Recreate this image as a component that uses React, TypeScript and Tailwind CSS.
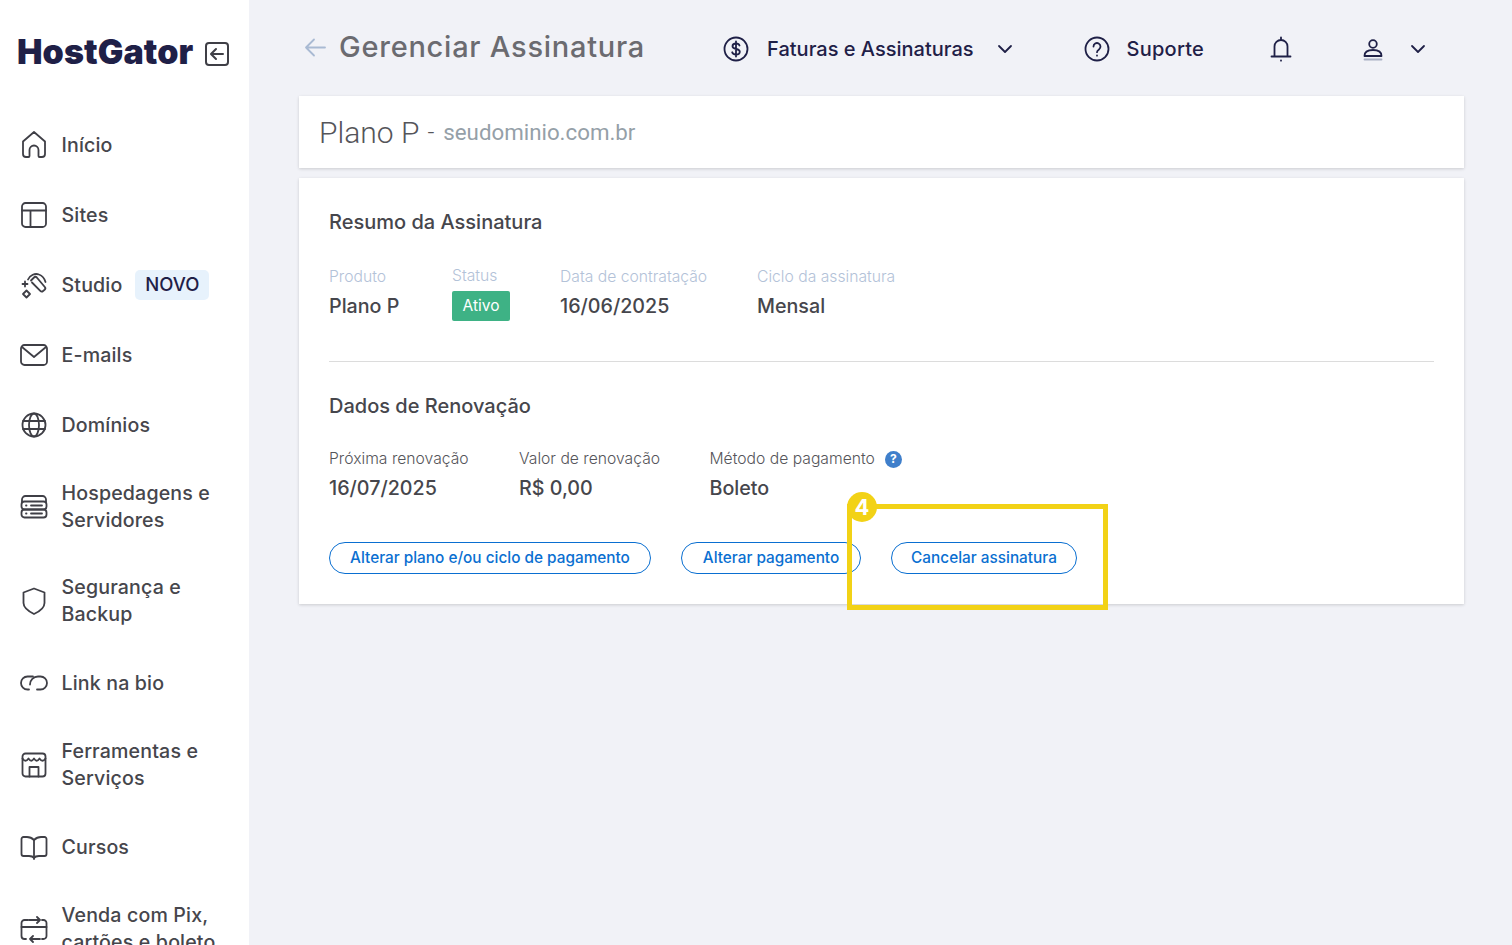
import type { ReactNode } from "react";

const sans = "font-['Inter','Noto_Sans',sans-serif]";

// sidebar icons, all drawn on a 28x28 box
function NavIcon({ children }: { children: ReactNode }) {
  return (
    <svg
      width="28"
      height="28"
      viewBox="0 0 28 28"
      fill="none"
      stroke="#3f3f46"
      strokeWidth="1.8"
      strokeLinecap="round"
      strokeLinejoin="round"
      className="shrink-0"
    >
      {children}
    </svg>
  );
}

const navItems: { label: ReactNode; badge?: string; tall?: boolean; icon: ReactNode }[] = [
  {
    label: "Início",
    icon: (
      <path d="M3 10.500 14 1l11 9.500V23a3 3 0 0 1-3 3h-2.500a1 1 0 0 1-1-1v-6a4.500 4.500 0 0 0-9 0v6a1 1 0 0 1-1 1H6a3 3 0 0 1-3-3z" />
    ),
  },
  {
    label: "Sites",
    icon: (
      <>
        <rect x="2" y="2" width="24" height="24" rx="3.500" />
        <path d="M2 9.500h24M10.500 9.500V26" />
      </>
    ),
  },
  {
    label: "Studio",
    badge: "NOVO",
    icon: (
      <>
        <path d="M11 9.500 14 6.500a2 2 0 0 1 2.800 0l8 9.500a2 2 0 0 1-.2 2.800l-1.500 1.200a2 2 0 0 1-2.800-.2L12 11.500" />
        <path d="M8 8.500C10 4 15 2 19 3.500c3 1 5.500 4 6.500 7.500" />
        <path d="M5 10.500v5M2.500 13h5M6.500 19.500l3.500 3.500-3.500 3.500L3 23z" />
      </>
    ),
  },
  {
    label: "E-mails",
    icon: (
      <>
        <rect x="1" y="4" width="26" height="20" rx="3.500" />
        <path d="m2 6 12 10L26 6" />
      </>
    ),
  },
  {
    label: "Domínios",
    icon: (
      <>
        <circle cx="14" cy="14" r="11.500" />
        <ellipse cx="14" cy="14" rx="5" ry="11.500" />
        <path d="M3 10h22M3 18h22" />
      </>
    ),
  },
  {
    label: (
      <>
        Hospedagens e
        <br />
        Servidores
      </>
    ),
    tall: true,
    icon: (
      <>
        <path d="M2 9V6.500A3.500 3.500 0 0 1 5.500 3h17A3.500 3.500 0 0 1 26 6.500V9" />
        <rect x="1.500" y="8.500" width="25" height="8" rx="3" />
        <rect x="1.500" y="16.500" width="25" height="8" rx="3" />
        <path d="M6 12.500h.5M6 20.500h.5M11 12.500h11M11 20.500h11" />
      </>
    ),
  },
  {
    label: (
      <>
        Segurança e
        <br />
        Backup
      </>
    ),
    tall: true,
    icon: <path d="M14 1.500 24.500 5.500v10.500c0 5-5 8.500-10.500 11C9 24.500 3.500 21 3.500 16V5.500z" />,
  },
  {
    label: "Link na bio",
    icon: (
      <>
        <path d="M9 20.500H7.500a6.500 6.500 0 0 1 0-13H13" />
        <path d="M10 15.500c0-4.500 3.500-8 8-8h2.500a6.500 6.500 0 0 1 0 13H17" />
      </>
    ),
  },
  {
    label: (
      <>
        Ferramentas e
        <br />
        Serviços
      </>
    ),
    tall: true,
    icon: (
      <>
        <rect x="2.500" y="2.500" width="23" height="23" rx="3" />
        <path d="M2.500 7.500c2 3 4 3 6 0 2 3 3.500 3 5.500 0 2 3 3.500 3 5.500 0 2 3 4 3 6 0" />
        <path d="M9.500 25.500V16h9v9.500" />
      </>
    ),
  },
  {
    label: "Cursos",
    icon: (
      <>
        <path d="M14 7c-2-2-4-3-7-3H3.500a2 2 0 0 0-2 2v15a2 2 0 0 0 2 2H9c2 0 4 .5 5 2 1-1.500 3-2 5-2h5.500a2 2 0 0 0 2-2V6a2 2 0 0 0-2-2H21c-3 0-5 1-7 3z" />
        <path d="M14 7v19" />
      </>
    ),
  },
  {
    label: (
      <>
        Venda com Pix,
        <br />
        cartões e boleto
      </>
    ),
    tall: true,
    icon: (
      <>
        <path d="M8 5H4.500a3 3 0 0 0-3 3v13a3 3 0 0 0 3 3H6M22 24h1.500a3 3 0 0 0 3-3V8a3 3 0 0 0-3-3H22" />
        <path d="M9 5h11M17 2l3 3-3 3M1.500 12h25M10 24h10M13 21l-3 3 3 3" />
      </>
    ),
  },
];

function Sidebar() {
  return (
    <aside className="w-[249px] h-[945px] shrink-0 overflow-hidden bg-white">
      <div className="h-[110px] flex items-start pt-[31px] pl-[17px] gap-[11px]">
        <span className="text-[34px] leading-[42px] font-black tracking-[0.1px] text-[#1f2047] font-['Inter',sans-serif]">
          HostGator
        </span>
        <svg width="26" height="26" viewBox="0 0 26 26" fill="none" stroke="#3f3f46" strokeWidth="2" strokeLinecap="round" strokeLinejoin="round" className="mt-[10px]">
          <rect x="2" y="2" width="22" height="22" rx="3" />
          <path d="M19 13H7.500M12 8l-5 5 5 5" />
        </svg>
      </div>
      <nav>
        {navItems.map((item, i) => (
          <div key={i} className={`flex items-center pl-[20px] ${item.tall ? "h-[94px]" : "h-[70px]"}`}>
            <NavIcon>{item.icon}</NavIcon>
            <div className="ml-[13.500px] text-[19.600px] leading-[27px] font-medium text-[#46464c] whitespace-nowrap tracking-[0.15px]">{item.label}</div>
            {item.badge && (
              <span className="ml-[13px] h-[30px] w-[74px] flex items-center justify-center rounded-[5px] bg-[#e7f2fc] text-[#1f2047] text-[18.500px] font-medium">
                {item.badge}
              </span>
            )}
          </div>
        ))}
      </nav>
    </aside>
  );
}

function TopBar() {
  const chevron = (
    <svg width="18" height="18" viewBox="0 0 18 18" fill="none" stroke="#1f2047" strokeWidth="1.800" strokeLinecap="round" strokeLinejoin="round">
      <path d="m3 6 6 6 6-6" />
    </svg>
  );
  return (
    <header className="h-[96px] flex items-center text-[#1f2047] pb-[2px]">
      <svg width="24" height="24" viewBox="0 0 24 24" fill="none" stroke="#a9bad3" strokeWidth="1.800" strokeLinecap="round" strokeLinejoin="round" className="ml-[4px]">
        <path d="M22 12.500H3M11 4.500l-8 8 8 8" />
      </svg>
      <h1 className="ml-[12px] text-[29px] font-medium text-[#6b6b70] tracking-[0.75px] whitespace-nowrap">Gerenciar Assinatura</h1>
      <div className="ml-[78px] mt-[4px] flex items-center">
        <svg width="26" height="26" viewBox="0 0 26 26" fill="none" stroke="#1f2047" strokeWidth="1.800" strokeLinecap="round">
          <circle cx="13" cy="13" r="11.500" />
          <path d="M16.500 9.500c-.5-1.500-2-2-3.500-2-2 0-3.500 1-3.500 2.800 0 3.700 7.300 1.700 7.300 5.400 0 1.800-1.700 2.800-3.800 2.800-1.700 0-3.200-.7-3.800-2.200M13 5.500v15" />
        </svg>
        <span className="ml-[18px] text-[20px] font-medium whitespace-nowrap">Faturas e Assinaturas</span>
        <span className="ml-[22px]">{chevron}</span>
      </div>
      <div className="ml-[70px] mt-[4px] flex items-center">
        <svg width="26" height="26" viewBox="0 0 26 26" fill="none" stroke="#1f2047" strokeWidth="1.800" strokeLinecap="round" strokeLinejoin="round">
          <circle cx="13" cy="13" r="11.500" />
          <path d="M9.500 10.500a3.500 3.500 0 1 1 5.500 2.900c-1.200.8-2 1.400-2 2.800M13 19.500v.2" />
        </svg>
        <span className="ml-[17px] text-[20px] font-medium tracking-[0.25px]">Suporte</span>
      </div>
      <svg width="24" height="26" viewBox="0 0 24 26" fill="none" stroke="#1f2047" strokeWidth="1.800" strokeLinecap="round" strokeLinejoin="round" className="ml-[65px] mt-[4px]">
        <path d="M12 1.500v2.500M5.500 20.500V10.500a6.500 6.500 0 0 1 13 0v10M2.500 20.500h19M12 24.500v.2" />
      </svg>
      <svg width="24" height="24" viewBox="0 0 24 24" fill="none" stroke="#1f2047" strokeWidth="1.800" strokeLinecap="round" strokeLinejoin="round" className="ml-[68px] mt-[4px]">
        <circle cx="12" cy="7" r="3.800" />
        <path d="M3.500 19c0-4 3.500-6 8.500-6s8.500 2 8.500 6z" />
        <path d="M3.500 22.500h17" stroke="#a9afc4" />
      </svg>
      <span className="ml-[24px] mt-[4px]">{chevron}</span>
    </header>
  );
}

function Field({ label, value, muted, children }: { label: ReactNode; value?: string; muted?: boolean; children?: ReactNode }) {
  return (
    <div>
      <div className={`flex items-center h-[20px] text-[15.700px] font-light whitespace-nowrap ${muted ? "text-[#b3c2d8]" : "text-[#55555a]"}`}>{label}</div>
      {children ?? <div className="mt-[4px] text-[19.700px] leading-[30px] font-medium text-[#46464c] whitespace-nowrap">{value}</div>}
    </div>
  );
}

function PillButton({ width, children }: { width: string; children: ReactNode }) {
  return (
    <button className={`${width} h-[32px] rounded-full border border-[#0a6fd1] text-[#0a6fd1] text-[15.350px] font-medium whitespace-nowrap bg-white`}>
      {children}
    </button>
  );
}

export default function App() {
  return (
    <div className={`w-[1512px] h-[945px] overflow-hidden flex bg-[#f1f2f7] relative ${sans}`}>
      <Sidebar />
      <main className="w-[1263px] pl-[50px] pr-[48px]">
        <TopBar />
        <section className="h-[72px] bg-white shadow-[0_1px_3px_rgba(0,0,0,0.16)] flex items-center pl-[20px] font-['Roboto',sans-serif]">
          <span className="text-[30px] font-light text-[#55555a]">Plano P</span>
          <span className="ml-[8px] text-[24px] font-light text-[#55555a]">-</span>
          <span className="ml-[9px] mt-[2px] text-[22.300px] text-[#95a0a8] font-normal">seudominio.com.br</span>
        </section>
        <section className="mt-[10px] h-[426px] bg-white shadow-[0_1px_3px_rgba(0,0,0,0.16)] px-[30px] pt-[31px]">
          <h2 className="text-[20px] leading-[26px] font-medium text-[#46464c]">Resumo da Assinatura</h2>
          <div className="mt-[32px] flex">
            <div className="w-[123px]">
              <Field label="Produto" value="Plano P" muted />
            </div>
            <div className="w-[108px]">
              <Field label={<span className="-mt-[2px]">Status</span>} muted>
                <span className="mt-[4px] flex items-center justify-center w-[58px] h-[30px] rounded-[2px] bg-[#3eb285] text-white text-[15.500px]">Ativo</span>
              </Field>
            </div>
            <div className="w-[197px]">
              <Field label="Data de contratação" value="16/06/2025" muted />
            </div>
            <Field label="Ciclo da assinatura" value="Mensal" muted />
          </div>
          <hr className="mt-[40px] border-[#dcdcdc]" />
          <h2 className="mt-[31px] text-[20px] leading-[26px] font-medium text-[#46464c]">Dados de Renovação</h2>
          <div className="mt-[30px] flex">
            <div className="w-[190px]">
              <Field label="Próxima renovação" value="16/07/2025" />
            </div>
            <div className="w-[190.500px]">
              <Field label="Valor de renovação" value="R$ 0,00" />
            </div>
            <Field
              label={
                <>
                  Método de pagamento
                  <span className="ml-[10px] w-[17px] h-[17px] rounded-full bg-[#3f7fcb] text-white text-[12px] font-bold flex items-center justify-center">?</span>
                </>
              }
              value="Boleto"
            />
          </div>
          <div className="mt-[39px] flex gap-[30px]">
            <PillButton width="w-[322px]">Alterar plano e/ou ciclo de pagamento</PillButton>
            <PillButton width="w-[180px]">Alterar pagamento</PillButton>
            <PillButton width="w-[186px]">Cancelar assinatura</PillButton>
          </div>
        </section>
      </main>
      {/* tutorial highlight over the cancel button */}
      <div className="absolute left-[847px] top-[504px] w-[261px] h-[106px] border-[5px] border-[#f2d216]" />
      <div className="absolute left-[847px] top-[492px] w-[30px] h-[30px] rounded-full bg-[#f2d216] text-white text-[22px] font-bold flex items-center justify-center">4</div>
    </div>
  );
}
